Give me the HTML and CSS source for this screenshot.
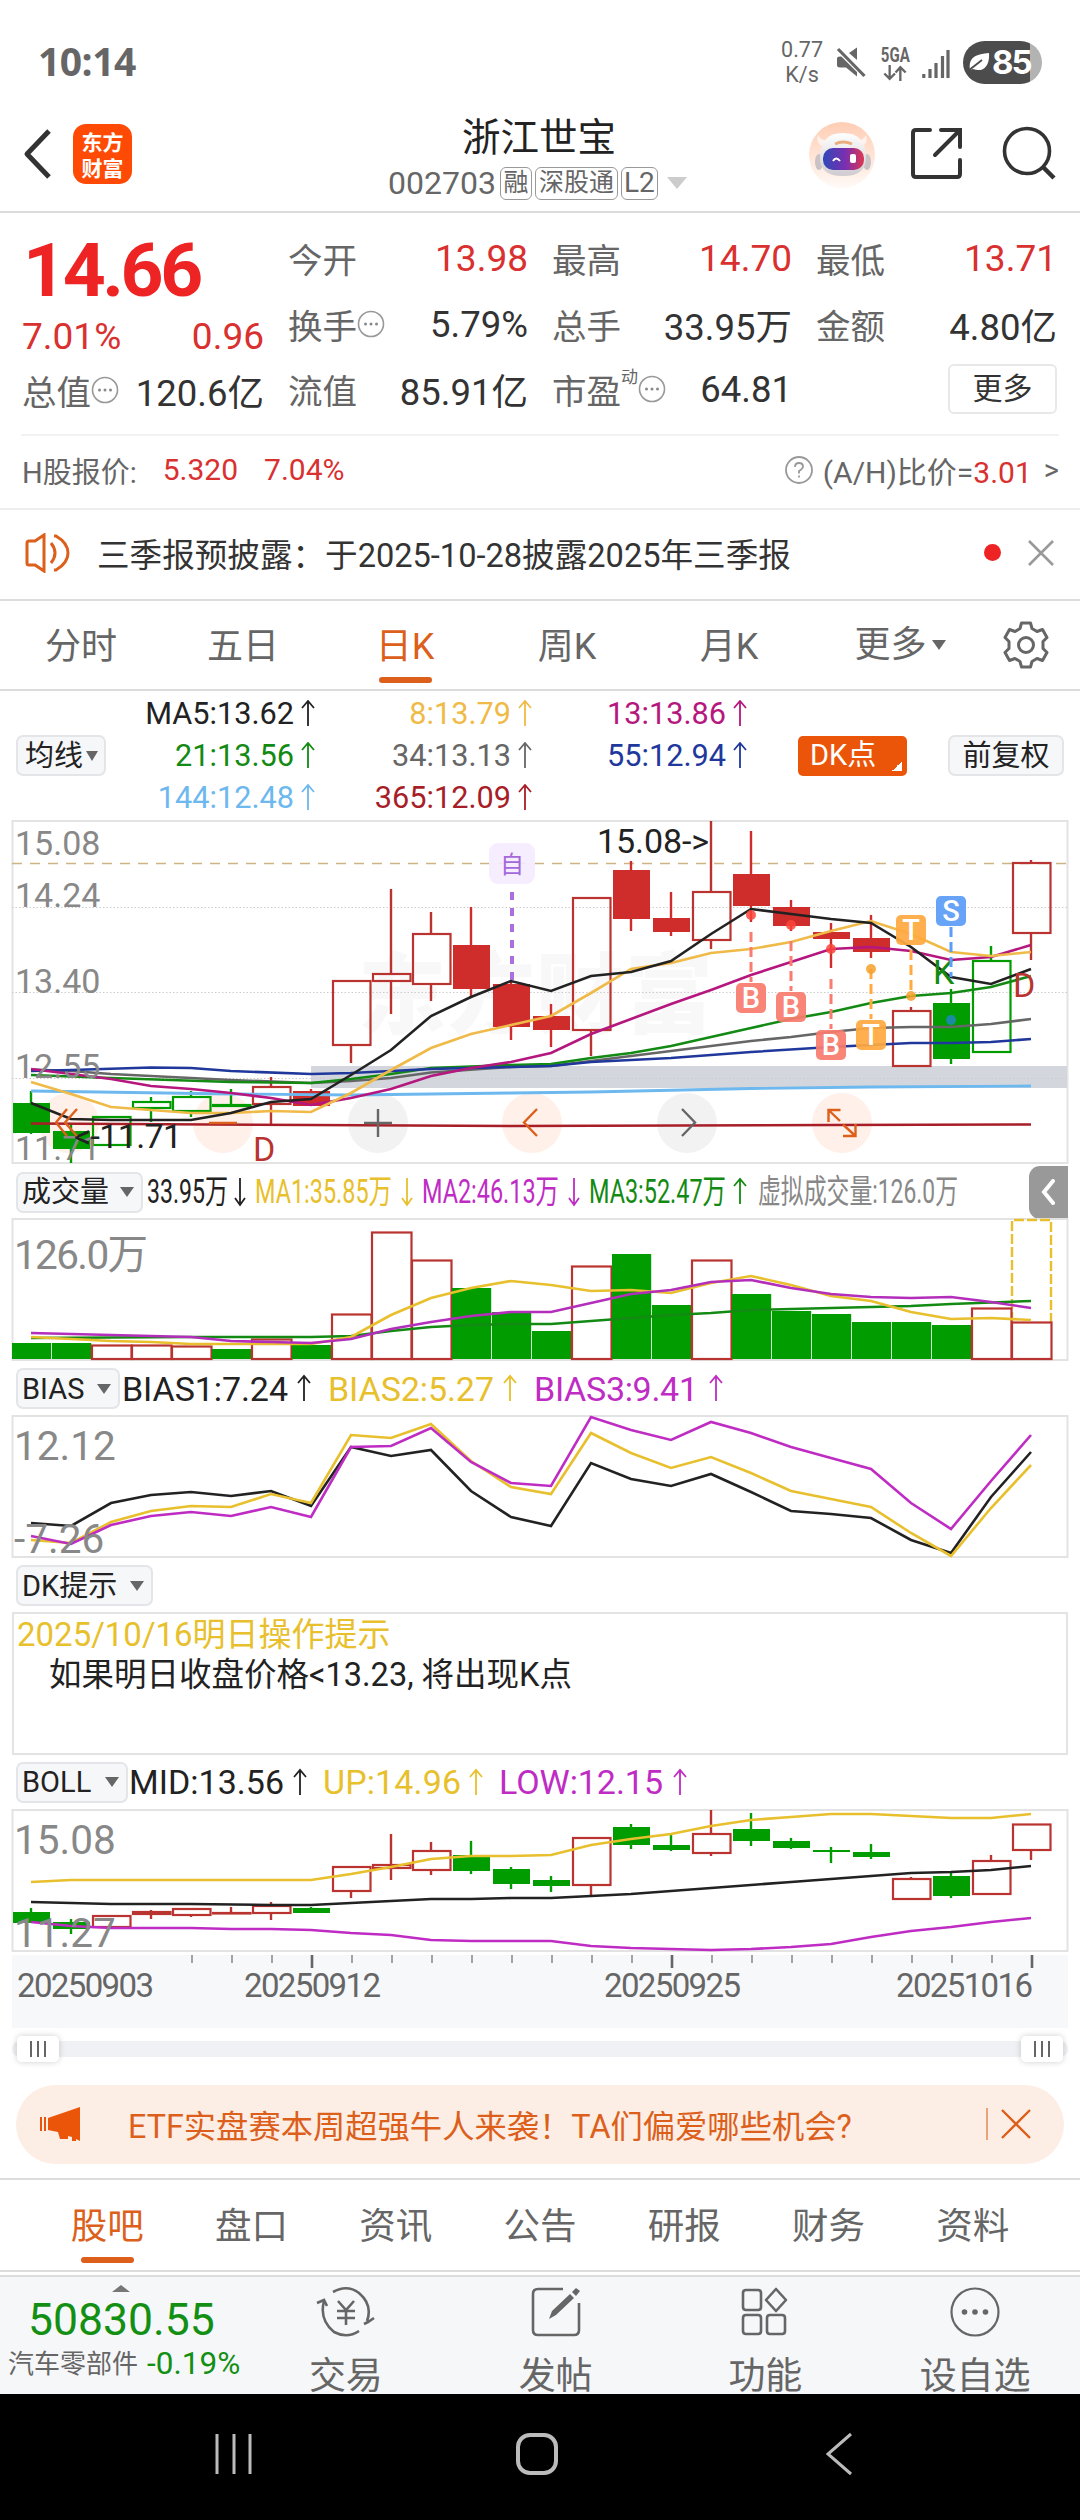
FILE: index.html
```html
<!DOCTYPE html>
<html lang="zh-CN">
<head>
	<meta charset="utf-8">
	<title>浙江世宝 002703</title>
	<meta name="viewport" content="width=device-width">
	<link rel="stylesheet" href="styles.css">
</head>
<body>
	<svg width="0" height="0" class="defs">
		<defs>
			<path id="up" d="M7 26V1M1 8L7 1L13 8" fill="none" stroke="currentColor" stroke-width="1.8"/>
			<path id="down" d="M6 0V27M1 20L6 27L11 20" fill="none" stroke="currentColor" stroke-width="1.8"/>
			<g id="dots">
				<circle cx="14" cy="14" r="12.5" fill="none" stroke="#999" stroke-width="1.6"/>
				<circle cx="8.5" cy="14" r="1.5" fill="#888"/><circle cx="14" cy="14" r="1.5" fill="#888"/><circle cx="19.5" cy="14" r="1.5" fill="#888"/>
			</g>
		</defs>
	</svg>

	<div class="status">
		<span class="clock">10:14</span>
		<span class="speed">0.77<br>K/s</span>
		<svg width="30" height="34" viewBox="0 0 30 34" class="mute">
			<path d="M1 11.500Q1 9.500 4 9.500H10L21 19V29.500L10 20.500H4Q1 20.500 1 18Z" fill="#666"/>
			<path d="M13 6L21 .5V13Z" fill="#666"/>
			<path d="M3 3L28 28" stroke="#fff" stroke-width="6"/>
			<path d="M2 2L28.500 29" stroke="#666" stroke-width="3.200"/>
		</svg>
		<span class="net">
			<b>5GA</b>
			<svg width="24" height="16" viewBox="0 0 20 15"><path d="M5 0V13M0 8L5 13L10 8M15 15V2M10.500 7L15 2L20 7" fill="none" stroke="#666" stroke-width="2.200"/></svg>
		</span>
		<svg width="28" height="28" viewBox="0 0 28 28" class="signal">
			<path d="M1.800 24V28M8 19V28M14 13V28M20.500 6V28M26 0V28" stroke="#666" stroke-width="3.200"/>
		</svg>
		<span class="battery">
			<svg width="22" height="20" viewBox="0 0 22 20"><path d="M2 18C0 6 7 2 21 1C22 14 15 21 5 17Z" fill="#fff"/><path d="M0 19L14 8" stroke="#4c4c4c" stroke-width="1.800"/></svg>85
		</span>
	</div>

	<header class="header">
		<svg width="30" height="52" viewBox="0 0 30 52" class="back"><path d="M26 3L4 26L26 49" fill="none" stroke="#333" stroke-width="5" stroke-linejoin="round"/></svg>
		<div class="logo">东方<br>财富</div>
		<div class="title">
			<h1>浙江世宝</h1>
			<p class="code"><span>002703</span><i>融</i><i class="w3">深股通</i><i class="l2">L2</i><b class="tri big"></b></p>
		</div>
		<svg width="68" height="70" viewBox="0 0 68 70" class="robot">
			<defs>
				<linearGradient id="halo" x1="0" y1="0" x2="0" y2="1"><stop offset="0" stop-color="#ffcdb4"/><stop offset="1" stop-color="#fffaf7"/></linearGradient>
				<linearGradient id="visor" x1="0" y1="0" x2="1" y2="0"><stop offset="0" stop-color="#2f48b8"/><stop offset=".55" stop-color="#7a2fb0"/><stop offset="1" stop-color="#e0364f"/></linearGradient>
				<linearGradient id="helmet" x1="0" y1="0" x2="0" y2="1"><stop offset="0" stop-color="#fff"/><stop offset="1" stop-color="#cfcbd0"/></linearGradient>
			</defs>
			<circle cx="34" cy="35" r="33" fill="url(#halo)"/>
			<path d="M10 15Q7 25 18 27L22 20Q13 22 10 15ZM58 15Q61 25 51 27L46 20Q55 22 58 15Z" fill="#fff2ea"/>
			<ellipse cx="11" cy="42" rx="4" ry="8" fill="#c9c3c6"/><ellipse cx="59" cy="42" rx="4" ry="8" fill="#c9c3c6"/>
			<path d="M12 38Q12 13 35 13Q58 13 58 38Q58 56 35 56Q12 56 12 38Z" fill="url(#helmet)"/>
			<rect x="15" y="28" width="41" height="22" rx="10" fill="url(#visor)"/>
			<path d="M25 41Q28 36 32 41" fill="none" stroke="#fff" stroke-width="2"/>
			<rect x="42" y="34" width="6" height="9" rx="2" fill="#fff"/>
			<path d="M27 24Q35 20 44 24" fill="none" stroke="#e9ae80" stroke-width="3"/>
		</svg>
		<svg width="54" height="54" viewBox="0 0 54 54" class="share"><path d="M20 3H6Q3 3 3 6V47Q3 50 6 50H47Q50 50 50 47V33M31 3H50V20M50 3L25 28" fill="none" stroke="#333" stroke-width="4" stroke-linecap="round"/></svg>
		<svg width="54" height="56" viewBox="0 0 54 56" class="search"><circle cx="25" cy="25" r="22.500" fill="none" stroke="#333" stroke-width="3.600"/><path d="M41 41L52 52" stroke="#333" stroke-width="4.500"/></svg>
	</header>

	<section class="quote">
		<div class="price">
			<strong>14.66</strong>
			<p class="red"><span>7.01%</span><span>0.96</span></p>
			<p><label>总值</label><svg width="28" height="28"><use href="#dots"/></svg><span class="end">120.6亿</span></p>
		</div>
		<div class="cells">
			<p><label>今开</label><span class="end red">13.98</span></p>
			<p><label>最高</label><span class="end red">14.70</span></p>
			<p><label>最低</label><span class="end red">13.71</span></p>
			<p><label>换手</label><svg width="28" height="28"><use href="#dots"/></svg><span class="end">5.79%</span></p>
			<p><label>总手</label><span class="end">33.95万</span></p>
			<p><label>金额</label><span class="end">4.80亿</span></p>
			<p><label>流值</label><span class="end">85.91亿</span></p>
			<p><label>市盈</label><sup>动</sup><svg width="28" height="28"><use href="#dots"/></svg><span class="end">64.81</span></p>
			<p><button class="more">更多</button></p>
		</div>
	</section>

	<section class="hstock">
		<span>H股报价:</span><span class="red h1">5.320</span><span class="red h2">7.04%</span>
		<svg width="30" height="30" viewBox="0 0 30 30"><circle cx="15" cy="15" r="13" fill="none" stroke="#999" stroke-width="1.800"/><path d="M11 12Q11 8 15 8Q19 8 19 11.500Q19 13.500 15 16V18.500M15 20.500V22.500" fill="none" stroke="#999" stroke-width="1.800"/></svg>
		<span class="ratio">(A/H)比价=<em class="red">3.01</em></span><span class="gt">&gt;</span>
	</section>

	<section class="notice">
		<svg width="46" height="40" viewBox="0 0 46 40"><path d="M2 10Q2 8 4 8H10L19 2V38L10 32H4Q2 32 2 30ZM26 10Q34 20 26 30M29 3H31Q43 10 43 20Q43 30 31 37H29" fill="none" stroke="#dc5f1b" stroke-width="3"/></svg>
		<span>三季报预披露：于2025-10-28披露2025年三季报</span>
		<i class="dot"></i>
		<svg width="26" height="26" viewBox="0 0 26 26"><path d="M1 1L25 25M25 1L1 25" stroke="#999" stroke-width="2.600"/></svg>
	</section>

	<nav class="periods">
		<a>分时</a><a>五日</a><a class="on">日K</a><a>周K</a><a>月K</a><a class="drop">更多<b class="tri"></b></a>
		<svg width="46" height="48" viewBox="0 0 46 48"><path d="M18.500 2H27.500L29 7.500L34 10.500L39.500 8.500L44 16.500L40 20.500V27.500L44 31.500L39.500 39.500L34 37.500L29 40.500L27.500 46H18.500L17 40.500L12 37.500L6.500 39.500L2 31.500L6 27.500V20.500L2 16.500L6.500 8.500L12 10.500L17 7.500Z" fill="none" stroke="#666" stroke-width="3" stroke-linejoin="round"/><circle cx="23" cy="24" r="7.500" fill="none" stroke="#666" stroke-width="3"/></svg>
	</nav>

	<section class="ma">
		<button class="pill">均线<b class="tri"></b></button>
		<div class="ma-grid">
			<span class="black">MA5:13.62<svg width="14" height="27"><use href="#up"/></svg></span>
			<span class="gold">8:13.79<svg width="14" height="27"><use href="#up"/></svg></span>
			<span class="rose">13:13.86<svg width="14" height="27"><use href="#up"/></svg></span>
			<span class="green">21:13.56<svg width="14" height="27"><use href="#up"/></svg></span>
			<span class="gray">34:13.13<svg width="14" height="27"><use href="#up"/></svg></span>
			<span class="blue">55:12.94<svg width="14" height="27"><use href="#up"/></svg></span>
			<span class="sky">144:12.48<svg width="14" height="27"><use href="#up"/></svg></span>
			<span class="dred">365:12.09<svg width="14" height="27"><use href="#up"/></svg></span>
		</div>
		<button class="dk">DK点</button>
		<button class="pill fq">前复权</button>
	</section>

	<svg class="chart" width="1080" height="346" viewBox="0 820 1080 346">
		<rect x="12.500" y="821" width="1055" height="342" class="frame"/>
		<text x="358" y="1026" class="mark" textLength="355">东方财富</text>
		<rect x="311" y="1066" width="756" height="22" fill="#d3d7dd"/>
		<path d="M12 907.500H1067M12 992.500H1067M12 1078.500H1067" class="grid"/>
		<g>
			<circle cx="69" cy="1123" r="30" fill="#fff0e9"/><circle cx="223" cy="1123" r="30" fill="#fff0e9"/>
			<circle cx="378" cy="1123" r="30" fill="#f2f2f2"/><circle cx="532" cy="1123" r="30" fill="#fff0e9"/>
			<circle cx="687" cy="1123" r="30" fill="#f2f2f2"/><circle cx="842" cy="1123" r="30" fill="#fff0e9"/>
		</g>
		<path d="M12 863.500H1067" stroke="#cdb485" stroke-width="1.600" stroke-dasharray="10 8"/>
		<rect x="489" y="843" width="46" height="41" rx="9" fill="#f5ecfe" fill-opacity=".9"/>
		<text x="512" y="873" font-size="24" text-anchor="middle" fill="#a568dc">自</text>
		<path d="M512 892V980" stroke="#ab6fe0" stroke-width="4" stroke-dasharray="8 8"/>
		<g id="kline"></g>
		<g class="axis34">
			<text x="15" y="855">15.08</text><text x="15" y="907">14.24</text><text x="15" y="993">13.40</text>
			<text x="15" y="1078">12.55</text><text x="15" y="1160">11.71</text>
		</g>
		<g font-size="34">
			<text x="74" y="1148" textLength="108" fill="#222">&lt;-11.71</text>
			<text x="597" y="853" textLength="112" fill="#222">15.08-&gt;</text>
			<text x="253" y="1161" fill="#b93430">D</text>
			<text x="933" y="984" fill="#138a13">K</text>
			<text x="1013" y="997" fill="#b93430">D</text>
		</g>
		<g id="signals"></g>
		<g fill="none" stroke="#dc5f1b" stroke-width="2.400">
			<path d="M67 1109L56 1122.500L67 1136M77 1109L65 1122.500L77 1136M209 1123H237M537 1109L524 1122.500L537 1136"/>
			<path d="M840.500 1110H828.500V1122M828.500 1110L840 1121M843 1136H855.500V1124M855.500 1136L843 1124.500"/>
			<path d="M364 1123H392M378 1109V1137M682 1109L695 1122.500L682 1136" stroke="#666"/>
		</g>
	</svg>

	<div class="legend vol">
		<button class="pill">成交量<b class="tri"></b></button>
		<svg width="830" height="52" viewBox="141 1166 830 52">
			<g font-size="33">
				<g class="black"><text x="145" y="1203" textLength="81" lengthAdjust="spacingAndGlyphs">33.95万</text><use href="#down" x="232" y="1178"/></g>
				<g class="yellow"><text x="253" y="1203" textLength="137" lengthAdjust="spacingAndGlyphs">MA1:35.85万</text><use href="#down" x="399" y="1178"/></g>
				<g class="purple"><text x="420" y="1203" textLength="137" lengthAdjust="spacingAndGlyphs">MA2:46.13万</text><use href="#down" x="566" y="1178"/></g>
				<g class="green"><text x="587" y="1203" textLength="137" lengthAdjust="spacingAndGlyphs">MA3:52.47万</text><use href="#up" x="731" y="1178"/></g>
				<text x="756" y="1203" textLength="200" lengthAdjust="spacingAndGlyphs" fill="#888">虚拟成交量:126.0万</text>
			</g>
		</svg>
		<span class="fold"><svg width="14" height="26" viewBox="0 0 14 26"><path d="M12 2L3 13L12 24" fill="none" stroke="#fff" stroke-width="4" stroke-linecap="round"/></svg></span>
	</div>
	<svg class="chart" width="1080" height="144" viewBox="0 1218 1080 144">
		<rect x="12.500" y="1219" width="1055" height="141" class="frame"/>
		<text x="14" y="1269" class="axis41" textLength="134">126.0万</text>
		<g id="volume"></g>
	</svg>

	<div class="legend">
		<button class="pill">BIAS<b class="tri"></b></button>
		<svg width="700" height="52" viewBox="120 1362 700 52">
			<g font-size="34">
				<g class="black"><text x="122" y="1399.500" textLength="166">BIAS1:7.24</text><use href="#up" x="297" y="1374"/></g>
				<g class="yellow"><text x="328" y="1399.500" textLength="166">BIAS2:5.27</text><use href="#up" x="503" y="1374"/></g>
				<g class="purple"><text x="534" y="1399.500" textLength="164">BIAS3:9.41</text><use href="#up" x="709" y="1374"/></g>
			</g>
		</svg>
	</div>
	<svg class="chart" width="1080" height="144" viewBox="0 1415 1080 144">
		<rect x="12.500" y="1416" width="1055" height="141" class="frame"/>
		<g id="bias"></g>
		<g class="axis41"><text x="14" y="1460">12.12</text><text x="14" y="1553">-7.26</text></g>
	</svg>

	<div class="legend">
		<button class="pill">DK提示<b class="tri"></b></button>
	</div>
	<div class="tips">
		<p class="yellow">2025/10/16明日操作提示</p>
		<p class="black indent">如果明日收盘价格&lt;13.23, 将出现K点</p>
	</div>

	<div class="legend boll">
		<button class="pill">BOLL<b class="tri"></b></button>
		<svg width="700" height="52" viewBox="128 1756 700 52">
			<g font-size="34">
				<g class="black"><text x="129" y="1794" textLength="155">MID:13.56</text><use href="#up" x="293" y="1769"/></g>
				<g class="yellow"><text x="323" y="1794" textLength="138">UP:14.96</text><use href="#up" x="469" y="1769"/></g>
				<g class="purple"><text x="499" y="1794" textLength="164">LOW:12.15</text><use href="#up" x="673" y="1769"/></g>
			</g>
		</svg>
	</div>
	<svg class="chart" width="1080" height="219" viewBox="0 1809 1080 219">
		<rect x="12.500" y="1810" width="1055" height="141" class="frame"/>
		<g id="boll"></g>
		<g class="axis41"><text x="14" y="1854">15.08</text><text x="14" y="1947">11.27</text></g>
		<rect x="12" y="1955" width="1056" height="73" fill="#f7f8fa"/>
		<g id="ticks"></g>
		<g font-size="33" fill="#666">
			<text x="17" y="1997" textLength="137">20250903</text>
			<text x="244" y="1997" textLength="137">20250912</text>
			<text x="604" y="1997" textLength="137">20250925</text>
			<text x="896" y="1997" textLength="137">20251016</text>
		</g>
	</svg>
	<div class="slider"><i></i><i></i></div>

	<div class="banner">
		<svg width="42" height="36" viewBox="0 0 42 36"><path d="M1 11V25M5 11V25" stroke="#eb5509" stroke-width="2"/><path d="M8 12L40 1V35L36 33V35H32V31L28 30V33H20L18 26L8 24Z" fill="#eb5509"/></svg>
		<span>ETF实盘赛本周超强牛人来袭！TA们偏爱哪些机会?</span>
		<svg width="46" height="34" viewBox="0 0 46 34"><path d="M1 1V33" stroke="#e08a55" stroke-width="1.500"/><path d="M16 3L44 31M44 3L16 31" stroke="#dc5f1b" stroke-width="2.400"/></svg>
	</div>

	<nav class="tabs">
		<a class="on">股吧</a><a>盘口</a><a>资讯</a><a>公告</a><a>研报</a><a>财务</a><a>资料</a>
	</nav>

	<footer class="toolbar">
		<div class="index">
			<b></b>
			<strong>50830.55</strong>
			<p>汽车零部件 <span>-0.19%</span></p>
		</div>
		<a>
			<svg width="60" height="52" viewBox="0 0 60 52"><path d="M17 6Q31 -2 43 7Q57 19 51 35M43 45Q31 53 18 46Q3 34 8 15M1 17L8 14L11 20M48 38L52 36L58 32" fill="none" stroke="#666" stroke-width="2.600"/><path d="M22 15L30 24L38 15M30 24V39M21 25H39M21 32H39" fill="none" stroke="#666" stroke-width="2.600"/></svg>
			交易
		</a>
		<a>
			<svg width="60" height="52" viewBox="0 0 60 52"><path d="M37 3H12Q7 3 7 8V44Q7 49 12 49H48Q53 49 53 44V17" fill="none" stroke="#666" stroke-width="2.600"/><path d="M23 33L26 25L44 8L48 12L30 29ZM46 6L50 2L54 5L50 10Z" fill="#666"/></svg>
			发帖
		</a>
		<a>
			<svg width="60" height="52" viewBox="0 0 60 52"><path d="M11 4H23Q26 4 26 7V21Q26 24 23 24H11Q8 24 8 21V7Q8 4 11 4ZM11 29H23Q26 29 26 32V45Q26 48 23 48H11Q8 48 8 45V32Q8 29 11 29ZM35 29H47Q50 29 50 32V45Q50 48 47 48H35Q32 48 32 45V32Q32 29 35 29ZM41 3L51 14L41 25L31 14Z" fill="none" stroke="#666" stroke-width="2.600" stroke-linejoin="round"/></svg>
			功能
		</a>
		<a>
			<svg width="60" height="52" viewBox="0 0 60 52"><circle cx="30" cy="26" r="23.500" fill="none" stroke="#666" stroke-width="2.200"/><circle cx="19.500" cy="26" r="2.800" fill="#666"/><circle cx="30" cy="26" r="2.800" fill="#666"/><circle cx="40.500" cy="26" r="2.800" fill="#666"/></svg>
			设自选
		</a>
	</footer>

	<div class="sysnav">
		<svg width="44" height="44" viewBox="0 0 44 44"><path d="M5 2V42M22 2V42M38 2V42" stroke="#bbb" stroke-width="3"/></svg>
		<svg width="44" height="44" viewBox="0 0 44 44"><rect x="3" y="3" width="38" height="38" rx="12" fill="none" stroke="#bbb" stroke-width="4"/></svg>
		<svg width="44" height="44" viewBox="0 0 44 44"><path d="M34 2L11 22L34 42" fill="none" stroke="#bbb" stroke-width="3"/></svg>
	</div>
	<script src="charts.js"></script>
</body>
</html>
```
FILE: styles.css
```css
* {
	margin: 0;
	padding: 0;
	box-sizing: border-box;
}

body {
	width: 1080px;
	background: #fff;
	color: #333;
	font-family: Roboto, "Noto Sans CJK SC", sans-serif;
	overflow-x: hidden;
}

svg {
	display: block;
	flex: none;
}

i, em {
	font-style: normal;
}

button {
	font-family: inherit;
	white-space: nowrap;
}

.defs {
	position: absolute;
}

/* 颜色 */
.red { color: #d93030; }
.black { color: #222; fill: #222; }
.gold { color: #f0ba48; }
.rose { color: #b5177e; }
.green { color: #138a13; fill: #138a13; }
.gray { color: #666; }
.blue { color: #20389c; }
.sky { color: #6db8ee; }
.dred { color: #a81e28; }
.yellow { color: #e8bf2c; fill: #e8bf2c; }
.purple { color: #bf2cc4; fill: #bf2cc4; }

.tri {
	display: inline-block;
	border: 7px solid transparent;
	border-top: 10px solid #666;
	border-bottom: 0;
}

/* 状态栏 */
.status {
	height: 96px;
	padding: 28px 38px 0 38px;
	display: flex;
	align-items: center;
	color: #666;
}

.clock {
	margin-top: -3px;
	font: 700 39px "Open Sans", sans-serif;
	letter-spacing: -0.5px;
}

.speed {
	margin-left: auto;
	font: 21.5px/25px Roboto, sans-serif;
	text-align: center;
}

.mute { margin: 3px 0 0 13px; }

.net {
	width: 28px;
	margin: 3px 0 0 15px;
	display: flex;
	flex-direction: column;
	align-items: center;
}

.net b {
	font: 700 20px/19px Roboto, sans-serif;
	transform: scaleX(0.75);
}

.signal { margin: 4px 13px 0 13px; }

.battery {
	width: 79px;
	height: 43px;
	padding-left: 5px;
	display: flex;
	align-items: center;
	gap: 2px;
	border-radius: 22px;
	background: linear-gradient(90deg, #4c4c4c 67px, #b3b3b3 67px);
	color: #fff;
	font: 700 33px Inter, sans-serif;
	letter-spacing: -2px;
}

/* 标题栏 */
.header {
	height: 117px;
	padding: 0 24px 0 23px;
	display: flex;
	align-items: center;
	border-bottom: 2px solid #dcdcdc;
}

.logo {
	width: 59px;
	height: 60px;
	margin-left: 20px;
	padding-top: 4px;
	border-radius: 13px;
	background: #ff4a05;
	color: #fff;
	font: 700 21px/26px "Noto Sans CJK SC", sans-serif;
	text-align: center;
}

.title {
	width: 300px;
	margin-left: 256px;
	padding-top: 4px;
	display: flex;
	flex-direction: column;
}

.title h1 {
	padding-left: 74px;
	color: #222;
	font-size: 38.5px;
	font-weight: 400;
	line-height: 55px;
}

.code {
	height: 36px;
	display: flex;
	align-items: center;
	gap: 3px;
	font-size: 32px;
	color: #666;
}

.code span { margin-right: 1px; }

.code i {
	width: 32px;
	height: 33px;
	border: 1.5px solid #999;
	border-radius: 6px;
	font-size: 25px;
	line-height: 29px;
	text-align: center;
	white-space: nowrap;
}

.code .w3 { width: 83px; }

.code .l2 {
	width: 37px;
	font-size: 28px;
}

.tri.big {
	margin-left: 6px;
	border-width: 12px 10px 0;
	border-top-color: #ccc;
}

.robot { margin: 2px 0 0 120px; }
.share { margin-left: 34px; }
.search { margin: 1px 0 0 auto; }

/* 报价 */
.quote {
	height: 221px;
	padding-left: 22px;
	display: flex;
	gap: 24px;
}

.quote p {
	display: flex;
	align-items: center;
	font-size: 36.5px;
	white-space: nowrap;
}

.quote label {
	color: #666;
	font-size: 34.5px;
}

.quote .end { margin-left: auto; }

.price { width: 242px; }

.price strong {
	display: block;
	height: 91px;
	padding: 12px 0 0 1px;
	color: #ee2424;
	font-size: 75px;
	font-weight: 700;
	line-height: 90px;
	letter-spacing: -3.4px;
}

.price p { height: 63px; }
.price p + p { height: 46px; }

.price p.red {
	padding-top: 2px;
	justify-content: space-between;
	font-size: 37px;
}

.cells {
	margin-top: 12px;
	display: grid;
	grid-template-columns: 240px 240px 241px;
	grid-template-rows: 66px 66px 64px;
	column-gap: 24px;
}

.cells .red { font-size: 37px; }

.cells sup {
	align-self: flex-start;
	margin-top: 6px;
	font-size: 17px;
	color: #666;
}

.more {
	width: 109px;
	height: 50px;
	margin-left: auto;
	border: 2px solid #e8e8e8;
	border-radius: 6px;
	background: #fff;
	color: #333;
	font-size: 30px;
	line-height: 40px;
}

.hstock {
	height: 74px;
	margin: 0 21px;
	padding: 0 0 5px 1px;
	display: flex;
	align-items: center;
	border-top: 2px solid #f2f2f2;
	color: #666;
	font-size: 29px;
}

.hstock .h1 { margin-left: 26px; font-size: 30px; }
.hstock .h2 { margin-left: 26px; font-size: 30px; }
.hstock svg { margin: 0 9px 0 auto; }
.hstock .ratio { font-size: 30px; }
.hstock .gt { margin-left: 12px; }

.notice {
	height: 93px;
	padding: 0 26px 4px 25px;
	display: flex;
	align-items: center;
	border-top: 2px solid #eee;
	border-bottom: 2px solid #dcdcdc;
	font-size: 32.6px;
}

.notice span { margin-left: 26px; }

.notice .dot {
	width: 17px;
	height: 17px;
	margin: 0 27px 0 auto;
	border-radius: 50%;
	background: #ee2424;
}

/* 周期切换 */
.periods {
	height: 90px;
	padding: 0 31px 0 0;
	display: flex;
	align-items: center;
	border-bottom: 2px solid #dcdcdc;
	color: #666;
	font-size: 36px;
}

.periods a {
	width: 162px;
	height: 88px;
	line-height: 92px;
	text-align: center;
}

.periods .drop {
	width: 180px;
	display: flex;
	justify-content: center;
	align-items: center;
	gap: 5px;
}

.periods svg { margin-left: auto; }

.on {
	display: flex;
	flex-direction: column;
	align-items: center;
	color: #dc5f1b;
}

.on::after {
	content: "";
	flex: none;
	width: 53px;
	height: 6px;
	margin-top: -16px;
	border-radius: 3px;
	background: #dc5f1b;
}

/* 均线 */
.ma {
	height: 129px;
	padding: 0 16px;
	display: flex;
	align-items: center;
}

.pill {
	height: 41px;
	padding: 0 7px 0 4px;
	display: flex;
	align-items: center;
	justify-content: space-between;
	border: 2px solid #e3e5e9;
	border-radius: 7px;
	background: #f6f7f9;
	color: #222;
	font-size: 29px;
	line-height: 36px;
}

.ma .pill {
	width: 90px;
	padding: 0 6px 0 7px;
}

.ma .pill .tri {
	margin: 0;
	border-width: 10px 6px 0;
}

.ma .fq {
	width: 116px;
	padding: 0;
	justify-content: center;
	margin-left: auto;
}

.ma-grid {
	margin-left: 10px;
	display: grid;
	grid-template-columns: 199px 217px 215px;
	grid-auto-rows: 42px;
	font-size: 30.7px;
}

.ma-grid span {
	display: flex;
	align-items: center;
	justify-content: flex-end;
	gap: 7px;
}

.dk {
	width: 109px;
	height: 40px;
	margin-left: 51px;
	padding: 0 0 2px 12px;
	border: 0;
	border-radius: 5px;
	background: linear-gradient(135deg, transparent 50%, #fff 50%) right 5px bottom 5px / 10px 10px no-repeat #eb5509;
	color: #fff;
	font-size: 29px;
	line-height: 36px;
	text-align: left;
}

/* 图表 */
.frame {
	fill: none;
	stroke: #e3e3e3;
	stroke-width: 2;
}

.grid {
	stroke: #ccc;
	stroke-width: 1;
	stroke-dasharray: 1.5 2;
}

.mark {
	font: 900 88px "Noto Sans CJK SC", sans-serif;
	fill: #f8f8f8;
}

.axis34 {
	font-size: 34px;
	fill: #888;
}

.axis41 {
	font-size: 40.5px;
	fill: #888;
}

.legend {
	height: 53px;
	padding-left: 16px;
	display: flex;
	align-items: center;
}

.legend.vol {
	height: 52px;
	padding-right: 12px;
}

.legend.boll { height: 54px; }

.legend .tri { margin-left: 13px; }
.boll .tri { margin-left: 14px; }
.vol .tri { margin-left: 11px; }

.fold {
	width: 39px;
	height: 53px;
	margin-left: auto;
	padding-right: 2px;
	display: flex;
	align-items: center;
	justify-content: center;
	border-radius: 11px 0 0 11px;
	background: #999;
}

.tips {
	height: 143px;
	margin: 0 12px;
	padding-left: 3px;
	border: 2px solid #e3e3e3;
	font-size: 33px;
	line-height: 41px;
}

.tips .indent {
	padding-left: 32px;
	font-size: 32.5px;
	line-height: 40px;
}

.slider {
	height: 16px;
	margin: 13px 12px 28px;
	padding: 0 5px;
	display: flex;
	align-items: center;
	justify-content: space-between;
	border-radius: 8px;
	background: #f0f1f4;
}

.slider i {
	width: 42px;
	height: 26px;
	border: 5px solid #fff;
	border-width: 5px 13px;
	border-radius: 5px;
	background: repeating-linear-gradient(90deg, #666 0 2px, #fff 2px 7px);
	box-shadow: 0 0 6px rgba(0, 0, 0, 0.2);
}

.banner {
	height: 79px;
	margin: 0 16px 14px;
	padding: 0 32px 2px 24px;
	display: flex;
	align-items: center;
	border-radius: 40px;
	background: #fdeee5;
	color: #dc5f1b;
	font-size: 32.3px;
}

.banner span {
	margin-left: 46px;
	flex: 1;
	white-space: nowrap;
}

/* 底部 */
.tabs {
	height: 94px;
	padding: 0 35px;
	display: flex;
	border-top: 2px solid #dcdcdc;
	border-bottom: 2px solid #dcdcdc;
	margin-bottom: 3px;
	color: #666;
	font-size: 36.5px;
}

.tabs a {
	flex: 1;
	height: 90px;
	line-height: 93px;
	text-align: center;
}

.toolbar {
	height: 119px;
	display: flex;
	border-top: 2px solid #dcdcdc;
	background: #f6f7f9;
	color: #666;
	overflow: hidden;
}

.toolbar a {
	flex: 1;
	padding-top: 9px;
	display: flex;
	flex-direction: column;
	align-items: center;
	font-size: 37px;
	line-height: 54px;
	white-space: nowrap;
}

.toolbar a svg { margin-bottom: 12px; }

.index {
	width: 241px;
	padding-left: 8px;
}

.index b {
	display: block;
	width: 18px;
	margin: 8px 0 0 104px;
	border: 9px solid transparent;
	border-top: 0;
	border-bottom: 7px solid #777;
}

.index strong {
	display: block;
	padding-left: 20px;
	color: #138f13;
	font-size: 44.5px;
	font-weight: 400;
	line-height: 57px;
}

.index p {
	margin-top: 3px;
	display: flex;
	align-items: center;
	gap: 9px;
	font-size: 26px;
	line-height: 24px;
	white-space: nowrap;
}

.index span {
	color: #138f13;
	font-size: 31.5px;
}

.sysnav {
	height: 126px;
	padding: 0 219px 6px 212px;
	display: flex;
	align-items: center;
	justify-content: space-between;
	background: #000;
}
```
FILE: charts.js
```javascript
const NS = "http://www.w3.org/2000/svg";
const RED = "#b93430";
const FILL_RED = "#cf2c2c";
const GREEN = "#009c00";

const px = i => 31 + 40 * i;

function add(parent, tag, attrs, text) {
	const el = document.createElementNS(NS, tag);
	for (const k in attrs) el.setAttribute(k, attrs[k]);
	if (text) el.textContent = text;
	parent.appendChild(el);
}

// 折线: [序号, y, 序号, y ...]
function line(parent, color, pts, width) {
	let s = "";
	for (let i = 0; i < pts.length; i += 2) s += px(pts[i]) + "," + pts[i + 1] + " ";
	add(parent, "polyline", { points: s, fill: "none", stroke: color, "stroke-width": width || 2.6 });
}

function full(parent, color, ys) {
	line(parent, color, ys.flatMap((y, i) => [i, y]));
}

// K线: [类型, 实体上, 实体下, 最高, 最低] 大写为实心
function candles(parent, rows) {
	rows.forEach((r, i) => {
		const x = px(i);
		const solid = r[0] === "G" || r[0] === "R";
		const color = r[0] === "G" || r[0] === "g" ? GREEN : solid ? FILL_RED : RED;
		if (r[3] < r[1]) add(parent, "path", { d: `M${x} ${r[3]}V${r[1]}`, stroke: color, "stroke-width": 2.4 });
		if (r[4] > r[2]) add(parent, "path", { d: `M${x} ${r[2]}V${r[4]}`, stroke: color, "stroke-width": 2.4 });
		if (solid) add(parent, "rect", { x: x - 18, y: r[1], width: 37, height: r[2] - r[1], fill: color });
		else add(parent, "rect", { x: x - 18, y: r[1], width: 37.5, height: r[2] - r[1], fill: "none", stroke: color, "stroke-width": 2.2 });
	});
}

const k = document.getElementById("kline");
candles(k, [
	["G", 1103, 1133, 1091, 1134], ["G", 1131, 1149, 1123, 1163], ["g", 1117, 1145, 1117, 1145],
	["g", 1102, 1108, 1097, 1122], ["g", 1097, 1111, 1091, 1117], ["g", 1105, 1106, 1089, 1107],
	["r", 1087, 1104, 1077, 1124], ["R", 1091, 1106, 1089, 1106], ["r", 981, 1045, 981, 1063],
	["r", 974, 981, 889, 1014], ["r", 934, 984, 912, 1001], ["R", 945, 989, 907, 998],
	["R", 984, 1027, 982, 1040], ["R", 1016, 1030, 1004, 1047], ["r", 898, 1030, 898, 1056],
	["R", 870, 919, 861, 931], ["R", 918, 932, 892, 936], ["r", 892, 940, 821, 949],
	["R", 874, 906, 831, 922], ["R", 907, 926, 900, 931], ["R", 932, 939, 923, 968],
	["R", 938, 952, 915, 958], ["r", 1011, 1066, 1007, 1066], ["G", 1003, 1059, 989, 1064],
	["g", 961, 1052, 946, 1052], ["r", 863, 933, 860, 960]
]);
line(k, "#6db8ee", [0, 1091, 5, 1094, 8, 1095, 12, 1093, 14, 1092, 18, 1088.5, 21, 1087, 25, 1086], 2.8);
line(k, "#a81e28", [0, 1123.5, 7, 1125, 12, 1126, 20, 1125, 25, 1124.5]);
line(k, "#666", [0, 1069.500, 1, 1071, 2, 1074, 4, 1078, 5, 1080, 7, 1083, 8, 1081, 9, 1078, 10, 1072.500, 12, 1067, 13, 1066, 14, 1061, 15, 1056, 16, 1051, 17, 1046, 18, 1041, 19, 1037, 20, 1032, 21, 1028, 22, 1027, 23, 1027, 24, 1024, 25, 1019]);
line(k, "#138a13", [0, 1075, 2, 1078, 5, 1082, 7, 1083, 8, 1079, 9, 1074, 10, 1068, 12, 1065, 13, 1064, 14, 1058, 15, 1053, 16, 1046, 17, 1037, 18, 1028, 19, 1019, 20, 1012, 21, 1003, 22, 996, 23, 993, 24, 987, 25, 976]);
line(k, "#20389c", [0, 1071, 1, 1070, 3, 1067.500, 4, 1068, 5, 1071, 7, 1074, 8, 1073, 10, 1069, 12, 1067, 13, 1066, 14, 1062, 16, 1058, 18, 1052, 20, 1047, 21, 1045, 22, 1043, 23, 1043, 24, 1042, 25, 1039]);
full(k, "#b5177e", [1069, 1074, 1079, 1086, 1089, 1093, 1098, 1105, 1098, 1089, 1076, 1068, 1062, 1053, 1034, 1019, 1004, 990, 975, 962, 949, 947, 951, 960, 957, 945]);
full(k, "#f0ba48", [1082, 1094, 1107, 1110, 1113, 1113, 1111, 1112, 1093, 1070, 1048, 1034, 1025, 1016, 993, 969, 963, 953, 949, 942, 931, 921, 934, 952, 956, 952]);
full(k, "#222", [1103, 1119, 1120, 1120, 1120, 1113, 1102, 1099, 1075, 1050, 1016, 997, 981, 991, 976, 972, 961, 934, 909, 914, 919, 923, 947, 977, 984, 969]);

// 买卖信号: [字母, 序号, 标签y, 圆点y, 虚线起, 虚线止, 颜色, 圆点色]
const sig = document.getElementById("signals");
[
	["B", 18, 983, 915, 932, 982, "#f97c6f", "#fb4438"],
	["B", 19, 992, 925, 941, 991, "#f97c6f", "#fb4438"],
	["B", 20, 1030, 949, 979, 1029, "#f97c6f", "#fb4438"],
	["T", 21, 1020, 969, 969, 1019, "#ffa93f", "#f6a02c"],
	["T", 22, 915, 996, 950, 996, "#ffa93f", "#f6a02c"],
	["S", 23, 896, 1020, 927, 977, "#5b9df8", "#1e88c0"]
].forEach(s => {
	const x = px(s[1]);
	add(sig, "path", { d: `M${x} ${s[4]}V${s[5]}`, stroke: s[6], "stroke-width": 3, "stroke-dasharray": "10 5" });
	add(sig, "circle", { cx: x, cy: s[3], r: 5, fill: s[7], "fill-opacity": 0.85 });
	add(sig, "rect", { x: x - 15, y: s[2], width: 30, height: 30, rx: 5, fill: s[6], "fill-opacity": 0.93 });
	add(sig, "text", { x: x, y: s[2] + 25, "font-size": 29, "font-weight": 500, "text-anchor": "middle", fill: "#fff" }, s[0]);
});

// 成交量
const v = document.getElementById("volume");
add(v, "path", { d: "M1012 1322V1220H1051V1322", fill: "none", stroke: "#e8bf2c", "stroke-width": 2.4, "stroke-dasharray": "10 3" });
const tops = [1343, 1343, 1345, 1345, 1346, 1349, 1339, 1345, 1314, 1232, 1260, 1288, 1312, 1331, 1266, 1254, 1305, 1260, 1294, 1311, 1314, 1322, 1322, 1325, 1308, 1322];
const kinds = "GGrrrGrGrrrGGGrGGrGGGGGGrr";
tops.forEach((y, i) => {
	if (kinds[i] === "G") add(v, "rect", { x: px(i) - 19, y: y, width: 39.2, height: 1359 - y, fill: GREEN });
	else add(v, "rect", { x: px(i) - 19, y: y + 0.5, width: 39.5, height: 1358.5 - y, fill: "none", stroke: RED, "stroke-width": 2.2 });
});
line(v, "#138a13", [0, 1338, 4, 1337, 7, 1337, 8, 1336, 9, 1331, 10, 1327, 11, 1325, 12, 1324, 13, 1324, 14, 1321, 15, 1318, 16, 1315, 17, 1313, 18, 1310, 20, 1308, 22, 1306, 23, 1304, 25, 1301]);
full(v, "#e8bf2c", [1337, 1339, 1341, 1342, 1344, 1344, 1344, 1344, 1337, 1315, 1298, 1288, 1281, 1285, 1291, 1290, 1293, 1283, 1276, 1285, 1296, 1301, 1312, 1319, 1318, 1320]);
full(v, "#b32fbb", [1333, 1334, 1335, 1336, 1337, 1341, 1342, 1343, 1339, 1329, 1322, 1316, 1312, 1312, 1303, 1294, 1290, 1282, 1280, 1288, 1294, 1297, 1298, 1297, 1302, 1308]);

const b = document.getElementById("bias");
full(b, "#222", [1523, 1526, 1503, 1495, 1492, 1496, 1491, 1506, 1447, 1456, 1450, 1491, 1517, 1526, 1463, 1479, 1486, 1474, 1492, 1511, 1514, 1518, 1540, 1553, 1497, 1452]);
full(b, "#e8bf2c", [1540, 1543, 1522, 1511, 1506, 1507, 1494, 1503, 1435, 1438, 1424, 1461, 1487, 1494, 1433, 1453, 1468, 1457, 1473, 1491, 1499, 1507, 1533, 1556, 1508, 1465]);
full(b, "#bf2cc4", [1536, 1544, 1525, 1516, 1512, 1516, 1507, 1517, 1447, 1446, 1428, 1462, 1483, 1486, 1417, 1430, 1440, 1422, 1433, 1447, 1458, 1469, 1503, 1529, 1481, 1435]);

const bo = document.getElementById("boll");
candles(bo, [
	["G", 1912, 1923, 1908, 1923], ["G", 1922, 1929, 1919, 1934], ["r", 1916, 1927, 1916, 1927],
	["r", 1912, 1914, 1910, 1919], ["r", 1909, 1915, 1908, 1917], ["r", 1913, 1913.5, 1907, 1913],
	["r", 1906, 1913, 1902, 1920], ["G", 1908, 1913, 1907, 1913], ["r", 1867, 1891, 1867, 1898],
	["r", 1865, 1868, 1834, 1880], ["r", 1851, 1870, 1842, 1875], ["G", 1855, 1871, 1841, 1874],
	["G", 1869, 1884, 1867, 1889], ["G", 1880, 1886, 1876, 1892], ["r", 1838, 1885, 1838, 1896],
	["G", 1827, 1845, 1824, 1849], ["G", 1845, 1850, 1835, 1851], ["r", 1834, 1853, 1810, 1856],
	["G", 1829, 1841, 1813, 1846], ["G", 1841, 1848, 1838, 1849], ["G", 1850, 1852, 1847, 1863],
	["G", 1852, 1857, 1844, 1859], ["r", 1879, 1899, 1877, 1899], ["G", 1876, 1896, 1872, 1898],
	["r", 1861, 1894, 1855, 1894], ["r", 1824.5, 1850, 1824, 1860]
]);
line(bo, "#e8bf2c", [0, 1882, 1, 1880, 7, 1880, 8, 1874, 9, 1867, 10, 1859, 11, 1856, 12, 1856, 13, 1855, 14, 1845, 15, 1839, 16, 1834, 17, 1826, 18, 1820, 19, 1817, 20, 1814, 21, 1814, 22, 1816, 23, 1818, 24, 1818, 25, 1814]);
line(bo, "#222", [0, 1902, 2, 1904, 4, 1904, 6, 1905, 7, 1905, 8, 1903, 10, 1899, 11, 1899, 12, 1898, 13, 1898, 14, 1896, 15, 1894, 17, 1888, 19, 1882, 21, 1876, 22, 1873, 23, 1872, 24, 1870, 25, 1866]);
line(bo, "#bf2cc4", [0, 1922, 1, 1926, 2, 1928, 4, 1928, 5, 1929, 6, 1929, 7, 1930, 8, 1933, 9, 1935, 10, 1940, 11, 1941, 13, 1941, 14, 1946, 15, 1948, 16, 1949, 17, 1950, 18, 1949, 19, 1947, 20, 1944, 21, 1937, 22, 1931, 23, 1927, 24, 1922, 25, 1918]);

// 日期刻度
const t = document.getElementById("ticks");
for (let i = 4; i < 26; i++) {
	const major = i % 9 === 7;
	add(t, "path", { d: `M${px(i) + 1} 1955V${major ? 1968 : 1963}`, stroke: major ? "#666" : "#999", "stroke-width": major ? 2.6 : 1.8 });
}
```
